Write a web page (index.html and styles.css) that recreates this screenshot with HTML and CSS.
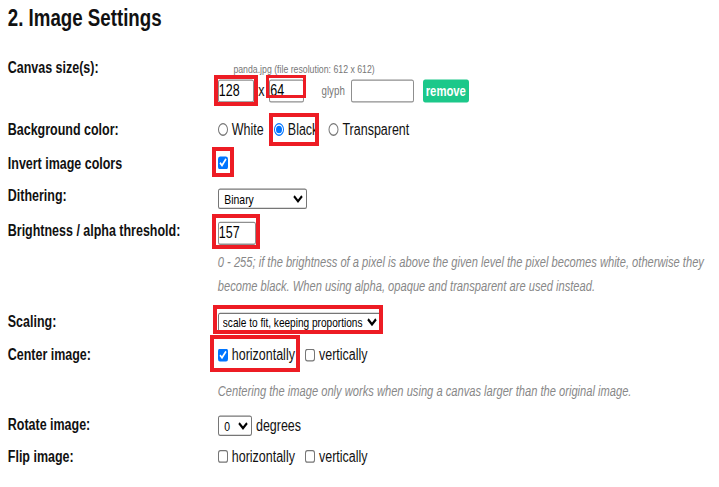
FILE: index.html
```html
<!DOCTYPE html>
<html lang="en">
<head>
<meta charset="utf-8">
<title>Image Settings</title>
<link rel="stylesheet" href="styles.css">
</head>
<body>
<div class="page">
  <h2 class="title">2. Image Settings</h2>
  <div class="form">
    <div class="row row-canvas">
      <div class="label">Canvas size(s):</div>
      <div class="value">
        <div class="note">panda.jpg (file resolution: 612 x 612)</div>
        <div class="sizes">
          <input class="num w128" type="text" value="128">
          <span class="times">x</span>
          <input class="num w64" type="text" value="64">
          <span class="glyph">glyph</span>
          <input class="glyph-in" type="text" value="">
          <button class="remove">remove</button>
        </div>
      </div>
    </div>
    <div class="row row-bg">
      <div class="label">Background color:</div>
      <div class="value opts">
        <label class="opt"><input type="radio" name="bg">White</label>
        <label class="opt"><input type="radio" name="bg" checked>Black</label>
        <label class="opt"><input type="radio" name="bg">Transparent</label>
      </div>
    </div>
    <div class="row row-invert">
      <div class="label">Invert image colors</div>
      <div class="value opts">
        <input type="checkbox" checked>
      </div>
    </div>
    <div class="row row-dither">
      <div class="label">Dithering:</div>
      <div class="value">
        <select class="sel sel-dither"><option>Binary</option></select>
      </div>
    </div>
    <div class="row row-bright">
      <div class="label">Brightness / alpha threshold:</div>
      <div class="value">
        <input class="num w157" type="text" value="157">
        <p class="help">0 - 255; if the brightness of a pixel is above the given level the pixel becomes white, otherwise they become black. When using alpha, opaque and transparent are used instead.</p>
      </div>
    </div>
    <div class="row row-scale">
      <div class="label">Scaling:</div>
      <div class="value">
        <select class="sel sel-scale"><option>scale to fit, keeping proportions</option></select>
      </div>
    </div>
    <div class="row row-center">
      <div class="label">Center image:</div>
      <div class="value">
        <div class="opts">
          <label class="opt"><input type="checkbox" checked>horizontally</label>
          <label class="opt"><input type="checkbox">vertically</label>
        </div>
        <p class="help">Centering the image only works when using a canvas larger than the original image.</p>
      </div>
    </div>
    <div class="row row-rotate">
      <div class="label">Rotate image:</div>
      <div class="value opts">
        <select class="sel sel-rot"><option>0</option></select>
        <span class="unit">degrees</span>
      </div>
    </div>
    <div class="row row-flip">
      <div class="label">Flip image:</div>
      <div class="value opts">
        <label class="opt"><input type="checkbox">horizontally</label>
        <label class="opt"><input type="checkbox">vertically</label>
      </div>
    </div>
  </div>
</div>
<div class="marks" aria-hidden="true">
  <span class="mark m1"></span>
  <span class="mark m2"></span>
  <span class="mark m3"></span>
  <span class="mark m4"></span>
  <span class="mark m5"></span>
  <span class="mark m6"></span>
  <span class="mark m7"></span>
</div>
</body>
</html>
```
FILE: styles.css
```css
html, body {
  margin: 0;
  padding: 0;
  background: #fff;
  overflow: hidden;
}
body {
  position: relative;
  width: 719px;
  height: 487px;
  font-family: "Liberation Sans", Arial, sans-serif;
  color: #111;
}
/* the reference is a horizontally condensed rendering: the page is laid out
   at 0.78 scale and stretched back vertically */
.page {
  box-sizing: border-box;
  width: 719px;
  padding: 0 4px 0 7.8px;
  transform: scaleY(1.2821);
  transform-origin: 0 0;
}
.title {
  margin: 0;
  padding-top: 1.56px;
  font-size: 18.72px;
  line-height: 23.4px;
  font-weight: bold;
}
.form {
  padding-top: 21.06px;
}
.row {
  display: grid;
  grid-template-columns: 210px 1fr;
  align-items: start;
}
.label {
  font-weight: bold;
  font-size: 12.48px;
  line-height: 14.04px;
}
.value {
  font-size: 12.48px;
  line-height: 14.04px;
}
.row-canvas { height: 47.58px; }
.row-bg { height: 27.3px; }
.row-invert { height: 24.96px; }
.row-dither { height: 27.3px; }
.row-bright { height: 70.98px; }
.row-scale { height: 25.74px; }
.row-center { height: 53.82px; }
.row-rotate { height: 24.96px; }
.row-flip { height: 23.4px; }

.note {
  font-size: 8.74px;
  line-height: 10.92px;
  color: #777;
  padding-left: 15.6px;
  margin-top: 3.12px;
}
.sizes {
  display: flex;
  align-items: center;
  margin-top: 1.56px;
}
input[type="text"], select, button {
  font-family: inherit;
  box-sizing: border-box;
  margin: 0;
}
.num, .glyph-in {
  height: 17.94px;
  border: 1px solid #8f8f8f;
  border-radius: 2px;
  padding: 0 1px 0 0;
  font-size: 12.48px;
  color: #000;
}
.w128 { width: 35.9px; }
.w64 { width: 34.3px; }
.w157 { width: 38.2px; margin-top: 2.34px; }
.times {
  font-size: 12.48px;
  margin: 0 4.68px;
}
.glyph {
  font-size: 9.75px;
  color: #777;
  margin: 0 6.24px 0 17.94px;
}
.glyph-in { width: 63.2px; }
.remove {
  margin-left: 8.58px;
  height: 17.94px;
  width: 46px;
  border: 0;
  border-radius: 2.34px;
  background: #1cc88a;
  color: #fff;
  font-weight: bold;
  font-size: 11.3px;
  padding: 0;
}
.opts {
  display: flex;
  align-items: center;
}
.opt {
  display: inline-flex;
  align-items: center;
  margin-right: 10.14px;
}
input[type="radio"], input[type="checkbox"] {
  margin: 0 3.9px 0 0;
  width: 10.14px;
  height: 10.14px;
}
.row-bg .value, .row-invert .value { margin-top: 0.78px; }
.sel {
  height: 15.6px;
  font-size: 10.4px;
  border: 1px solid #767676;
  border-radius: 2px;
  padding: 0 0 0 1.56px;
  background: #fff;
  color: #000;
}
.sel-dither { width: 89.7px; margin-top: 1.56px; }
.sel-scale {
  width: 163px;
  margin-top: -0.78px;
  padding-left: 0;
  font-size: 10.1px;
}
.sel-rot { width: 34.3px; margin-top: 0.78px; margin-right: 3.9px; }
.help {
  margin: 3.9px 0 0;
  font-style: italic;
  font-size: 11.15px;
  line-height: 18.72px;
  color: #888;
}
.row-center .help { margin-top: 11.7px; }

.marks {
  position: absolute;
  left: 0;
  top: 0;
  width: 0;
  height: 0;
}
.mark {
  position: absolute;
  box-sizing: border-box;
  border: 4px solid #ed1c24;
}
.m1 { left: 214px; top: 75px; width: 44px; height: 31px; }
.m2 { left: 266px; top: 75px; width: 40px; height: 23px; border-width: 3px; }
.m3 { left: 269px; top: 113px; width: 50px; height: 33px; }
.m4 { left: 212px; top: 147px; width: 22px; height: 30px; }
.m5 { left: 212px; top: 214px; width: 48px; height: 35px; }
.m6 { left: 213px; top: 305px; width: 170px; height: 29px; }
.m7 { left: 210px; top: 335px; width: 90px; height: 37px; }
```
